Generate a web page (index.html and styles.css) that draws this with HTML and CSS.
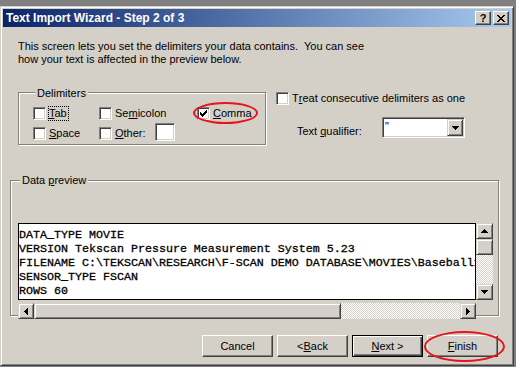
FILE: index.html
```html
<!DOCTYPE html>
<html lang="en">
<head>
    <meta charset="UTF-8">
    <title>Text Import Wizard - Step 2 of 3</title>
    <link rel="stylesheet" href="styles.css">
</head>
<body>
    <div class="window">
        <!-- title bar -->
        <div class="titlebar">
            <span class="title">Text Import Wizard - Step 2 of 3</span>
            <div class="caption-btns">
                <span class="cbtn help">?</span>
                <span class="cbtn">
                    <svg width="8" height="7" viewBox="0 0 8 7" shape-rendering="crispEdges"><path d="M0 0h2v1h-2z M6 0h2v1h-2z M1 1h2v1h-2z M5 1h2v1h-2z M2 2h4v1h-4z M3 3h2v1h-2z M2 4h4v1h-4z M1 5h2v1h-2z M5 5h2v1h-2z M0 6h2v1h-2z M6 6h2v1h-2z"/></svg>
                </span>
            </div>
        </div>

        <p class="intro">This screen lets you set the delimiters your data contains.&nbsp; You can see<br>how your text is affected in the preview below.</p>

        <div class="options">
            <div class="group delimiters">
                <div class="group-title">Delimiters</div>
                <div class="delim-grid">
                    <div class="check"><span class="box"></span><span class="focus"><u>T</u>ab</span></div>
                    <div class="check"><span class="box"></span>Se<u>m</u>icolon</div>
                    <div class="check"><span class="box"><svg width="7" height="7" viewBox="0 0 7 7" shape-rendering="crispEdges"><path d="M0 2h1v3h-1z M1 3h1v3h-1z M2 4h1v3h-1z M3 3h1v3h-1z M4 2h1v3h-1z M5 1h1v3h-1z M6 0h1v3h-1z"/></svg></span><u>C</u>omma</div>
                    <div class="check"><span class="box"></span><u>S</u>pace</div>
                    <div class="check"><span class="box"></span><u>O</u>ther:<span class="other-input"></span></div>
                </div>
            </div>

            <div class="side">
                <div class="check"><span class="box"></span>T<u>r</u>eat consecutive delimiters as one</div>
                <div class="qualifier">
                    <span class="qualifier-label">Text <u>q</u>ualifier:</span>
                    <div class="combo">
                        <span class="combo-value">"</span>
                        <span class="scroll-btn drop-btn">
                            <svg width="7" height="4" viewBox="0 0 7 4" shape-rendering="crispEdges"><path d="M0 0h7v1h-7z M1 1h5v1h-5z M2 2h3v1h-3z M3 3h1v1h-1z"/></svg>
                        </span>
                    </div>
                </div>
            </div>
        </div>

        <div class="group preview">
            <div class="group-title">Data <u>p</u>review</div>
            <div class="list-row">
<pre class="list">DATA_TYPE MOVIE
VERSION Tekscan Pressure Measurement System 5.23
FILENAME C:\TEKSCAN\RESEARCH\F-SCAN DEMO DATABASE\MOVIES\Baseball1.fsx
SENSOR_TYPE FSCAN
ROWS 60</pre>
                <div class="vscroll">
                    <span class="scroll-btn">
                        <svg width="7" height="4" viewBox="0 0 7 4" shape-rendering="crispEdges"><path d="M3 0h1v1h-1z M2 1h3v1h-3z M1 2h5v1h-5z M0 3h7v1h-7z"/></svg>
                    </span>
                    <span class="scroll-btn thumb"></span>
                    <span class="track"></span>
                    <span class="scroll-btn">
                        <svg width="7" height="4" viewBox="0 0 7 4" shape-rendering="crispEdges"><path d="M0 0h7v1h-7z M1 1h5v1h-5z M2 2h3v1h-3z M3 3h1v1h-1z"/></svg>
                    </span>
                </div>
            </div>
            <div class="hscroll">
                <span class="scroll-btn">
                    <svg width="4" height="7" viewBox="0 0 4 7" shape-rendering="crispEdges"><path d="M0 3h1v1h-1z M1 2h1v3h-1z M2 1h1v5h-1z M3 0h1v7h-1z"/></svg>
                </span>
                <span class="scroll-btn hthumb"></span>
                <span class="track"></span>
                <span class="scroll-btn">
                    <svg width="4" height="7" viewBox="0 0 4 7" shape-rendering="crispEdges"><path d="M0 0h1v7h-1z M1 1h1v5h-1z M2 2h1v3h-1z M3 3h1v1h-1z"/></svg>
                </span>
            </div>
        </div>

        <div class="buttons">
            <span class="btn">Cancel</span>
            <span class="btn">&lt; <u>B</u>ack</span>
            <span class="btn default"><u>N</u>ext &gt;</span>
            <span class="btn"><u>F</u>inish</span>
        </div>
    </div>

    <!-- red marks drawn over the dialog -->
    <div class="ring ring-comma"></div>
    <div class="ring ring-finish"></div>
</body>
</html>
```

FILE: styles.css
```css
body {
    margin: 0;
    padding-top: 6px;
    width: 516px;
    height: 367px;
    box-sizing: border-box;
    position: relative;
    overflow: hidden;
    background: #808080;
    font-family: "Liberation Sans", Arial, sans-serif;
    font-size: 11px;
    line-height: 13px;
    color: #000;
}

.window {
    width: 514px;
    height: 360px;
    box-sizing: border-box;
    padding: 2px;
    background: #d4d0c8;
    border: 1px solid;
    border-color: #d4d0c8 #404040 #404040 #d4d0c8;
    box-shadow: inset 1px 1px #fff, inset -1px -1px #808080;
}

/* title bar */
.titlebar {
    height: 18px;
    display: flex;
    align-items: center;
    justify-content: space-between;
    padding: 0 2px 0 3px;
    background: linear-gradient(to right, #0a246a, #a6caf0);
    color: #fff;
    font-weight: bold;
    font-size: 12px;
}

.caption-btns {
    display: flex;
    gap: 2px;
}

.cbtn {
    width: 16px;
    height: 14px;
    box-sizing: border-box;
    display: flex;
    align-items: center;
    justify-content: center;
    background: #d4d0c8;
    border: 1px solid;
    border-color: #fff #404040 #404040 #fff;
    box-shadow: inset -1px -1px #808080;
    color: #000;
}

.cbtn.help {
    font-size: 11px;
    line-height: 12px;
}

.intro {
    margin: 13px 0 0 15px;
}

/* group boxes */
.group {
    border: 1px solid #808080;
    box-shadow: inset 1px 1px #fff, 1px 1px #fff;
    box-sizing: border-box;
}

.group-title {
    display: table;
    margin: -6px 0 0 2px;
    padding: 0 2px;
    background: #d4d0c8;
}

.options {
    display: flex;
    align-items: flex-start;
    margin: 26px 0 0 15px;
}

.delimiters {
    width: 248px;
    padding: 0 0 4px 14px;
}

.delim-grid {
    display: grid;
    grid-template-columns: 66px 98px auto;
    row-gap: 7px;
    margin-top: 7px;
}

.check {
    display: flex;
    align-items: flex-start;
    height: 13px;
    white-space: nowrap;
}

.box {
    flex: none;
    width: 13px;
    height: 13px;
    box-sizing: border-box;
    margin-right: 3px;
    display: flex;
    align-items: center;
    justify-content: center;
    background: #fff;
    border: 1px solid;
    border-color: #808080 #fff #fff #808080;
    box-shadow: inset 1px 1px #404040, inset -1px -1px #d4d0c8;
}

.focus {
    outline: 1px dotted #000;
    padding-right: 1px;
}

.other-input {
    width: 20px;
    height: 18px;
    box-sizing: border-box;
    margin: -4px 0 0 9px;
    background: #fff;
    border: 1px solid;
    border-color: #808080 #fff #fff #808080;
    box-shadow: inset 1px 1px #404040, inset -1px -1px #d4d0c8;
}

.side {
    margin-left: 10px;
}

.qualifier {
    display: flex;
    align-items: flex-start;
    margin: 12px 0 0 21px;
}

.qualifier-label {
    width: 85px;
    margin-top: 8px;
}

.combo {
    width: 83px;
    height: 21px;
    box-sizing: border-box;
    padding: 1px;
    display: flex;
    justify-content: space-between;
    background: #fff;
    border: 1px solid;
    border-color: #808080 #fff #fff #808080;
    box-shadow: inset 1px 1px #404040, inset -1px -1px #d4d0c8;
}

.combo-value {
    margin: 1px 0 0 1px;
}

/* scroll bar parts */
.scroll-btn {
    flex: none;
    width: 16px;
    height: 16px;
    box-sizing: border-box;
    display: flex;
    align-items: center;
    justify-content: center;
    background: #d4d0c8;
    border: 1px solid;
    border-color: #d4d0c8 #404040 #404040 #d4d0c8;
    box-shadow: inset 1px 1px #fff, inset -1px -1px #808080;
}

.drop-btn {
    height: 17px;
}

.track {
    flex: 1;
    background: repeating-conic-gradient(#fff 0 25%, #d4d0c8 0 50%) 0 0 / 2px 2px;
}

.preview {
    width: 489px;
    margin: 35px 0 0 7px;
    padding-left: 7px;
}

.preview .group-title {
    margin-top: -7px;
}

.list-row {
    display: flex;
    margin-top: 36px;
}

.list {
    width: 458px;
    height: 77px;
    box-sizing: border-box;
    margin: 0;
    padding: 4px 0 0;
    overflow: hidden;
    background: #fff;
    border: 1px solid #000;
    font: 11.67px/14px "Liberation Mono", "Courier New", monospace;
    -webkit-text-stroke: 0.3px #000;
    white-space: pre;
}

.vscroll {
    width: 17px;
    height: 77px;
    display: flex;
    flex-direction: column;
}

.vscroll .scroll-btn {
    width: 17px;
}

.hscroll {
    width: 458px;
    height: 16px;
    display: flex;
    margin: 3px 0 -4px;
}

.hthumb {
    width: 307px;
}

/* dialog buttons */
.buttons {
    display: flex;
    justify-content: flex-end;
    gap: 4px;
    margin: 19px 13px 0 0;
}

.btn {
    width: 71px;
    height: 22px;
    box-sizing: border-box;
    display: flex;
    align-items: center;
    justify-content: center;
    background: #d4d0c8;
    border: 1px solid;
    border-color: #fff #404040 #404040 #fff;
    box-shadow: inset -1px -1px #808080;
}

.btn.default {
    border-color: #000;
    box-shadow: inset 1px 1px #fff, inset -1px -1px #404040, inset -2px -2px #808080;
}

.ring {
    position: absolute;
    box-sizing: border-box;
    border: 2px solid #e8141c;
    border-radius: 50%;
}

.ring-comma {
    left: 193px;
    top: 102px;
    width: 65px;
    height: 22px;
}

.ring-finish {
    left: 424px;
    top: 331px;
    width: 81px;
    height: 31px;
}
```
